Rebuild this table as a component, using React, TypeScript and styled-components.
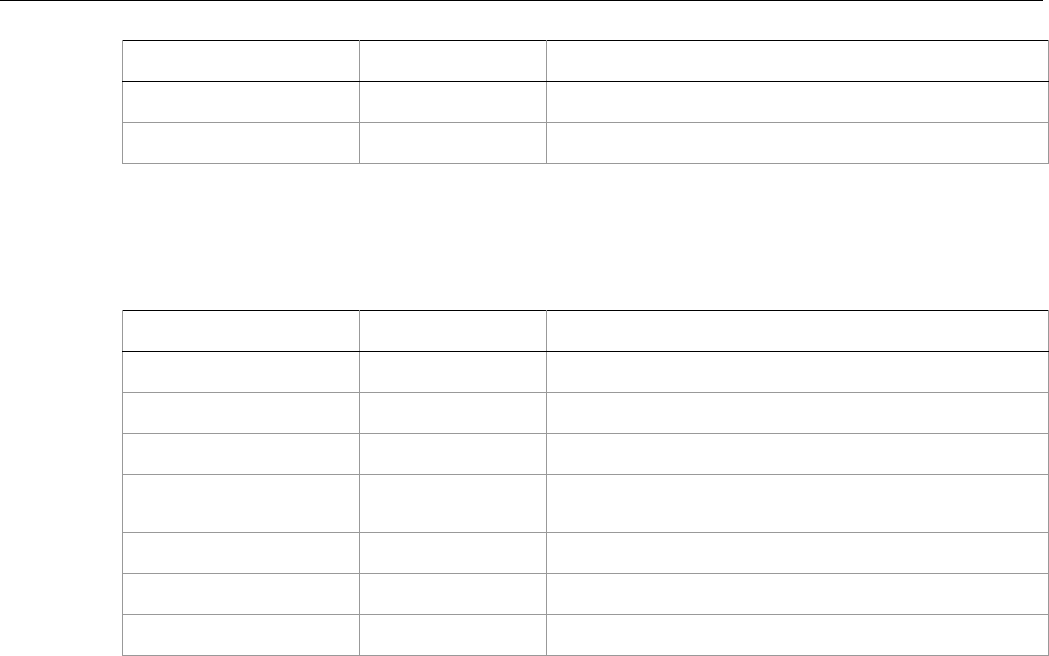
import styled, { createGlobalStyle } from 'styled-components'

const GlobalStyle = createGlobalStyle`
  html, body {
    margin: 0;
    padding: 0;
    background: #fff;
    font-family: "Liberation Sans", Arial, sans-serif;
    font-size: 12px;
    color: #000;
  }
`

const Page = styled.div`
  display: flex;
  flex-direction: column;
`

const TopRule = styled.div`
  width: 1043px;
  height: 1px;
  background: #000;
`

const TableWrap = styled.div<{ $top: number }>`
  margin-top: ${p => p.$top}px;
  padding-left: 122px;
`

const Table = styled.table`
  width: 927px;
  border-collapse: collapse;
  table-layout: fixed;
  border-top: 1px solid #000;
  border-bottom: 1px solid #000;
  border-left: 1px solid #999;
  border-right: 1px solid #999;
`

const HeadCell = styled.th`
  height: 40px;
  padding: 0 8px;
  border-left: 1px solid #999;
  border-right: 1px solid #999;
  border-bottom: 1px solid #000;
  text-align: left;
  font-weight: bold;
`

const Cell = styled.td<{ $tall?: boolean }>`
  height: ${p => (p.$tall ? 57 : 40)}px;
  padding: 0 8px;
  border: 1px solid #999;
  vertical-align: middle;
`

type Row = { id: string; tall?: boolean }

const firstRows: Row[] = [{ id: 'a1' }, { id: 'a2' }]

const secondRows: Row[] = [
  { id: 'b1' },
  { id: 'b2' },
  { id: 'b3' },
  { id: 'b4', tall: true },
  { id: 'b5' },
  { id: 'b6' },
  { id: 'b7' },
]

function DataTable({ rows }: { rows: Row[] }) {
  return (
    <Table>
      <colgroup>
        <col style={{ width: 237 }} />
        <col style={{ width: 187 }} />
        <col />
      </colgroup>
      <thead>
        <tr>
          <HeadCell />
          <HeadCell />
          <HeadCell />
        </tr>
      </thead>
      <tbody>
        {rows.map(r => (
          <tr key={r.id}>
            <Cell $tall={r.tall} />
            <Cell $tall={r.tall} />
            <Cell $tall={r.tall} />
          </tr>
        ))}
      </tbody>
    </Table>
  )
}

export default function App() {
  return (
    <>
      <GlobalStyle />
      <Page>
        <TopRule />
        <TableWrap $top={39}>
          <DataTable rows={firstRows} />
        </TableWrap>
        <TableWrap $top={146}>
          <DataTable rows={secondRows} />
        </TableWrap>
      </Page>
    </>
  )
}
